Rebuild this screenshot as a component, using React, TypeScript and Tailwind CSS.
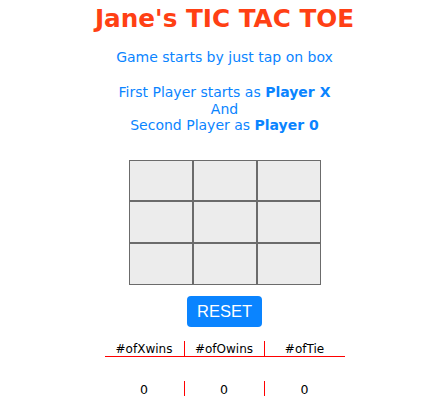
const cellHeights = ["h-[41px]", "h-[42px]", "h-[42px]"];

const Board = () => (
  <div className="mt-[26px] flex flex-col">
    {cellHeights.map((h, r) => (
      <div key={r} className="flex">
        {[0, 1, 2].map((c) => (
          <div key={c} className={`w-[64px] ${h} border border-[#6b6b6b] bg-[#ececec]`} />
        ))}
      </div>
    ))}
  </div>
);

const Scores = () => {
  const heads = ["#ofXwins", "#ofOwins", "#ofTie"];
  return (
    <div className="mt-[14px] w-[240px] text-[12px] text-black">
      <div className="flex h-[16px] border-b border-[#f00] leading-[14px]">
        {heads.map((h, i) => (
          <div key={h} className={`w-[80px] text-center pt-[1px] ${i < 2 ? "border-r border-[#f00]" : ""}`}>
            {h}
          </div>
        ))}
      </div>
      <div className="flex h-[15px] mt-[24px] leading-[15px] text-[12.5px]">
        {[0, 0, 0].map((v, i) => (
          <div key={i} className={`w-[80px] text-center pt-[1px] ${i < 2 ? "border-r border-[#f00]" : ""}`}>
            {v}
          </div>
        ))}
      </div>
    </div>
  );
};

export default function App() {
  return (
    <div className="flex flex-col items-center w-[447px] h-[412px] pl-[2px] bg-white font-['DejaVu_Sans',Verdana,sans-serif]">
      <h1 className="mt-[5px] text-[24.7px] leading-[28px] font-bold text-[#ff4014]">Jane's TIC TAC TOE</h1>
      <p className="mt-[16px] text-[14px] leading-[16.5px] text-[#0a84ff]">Game starts by just tap on box</p>
      <p className="mt-[18.5px] text-[14px] leading-[16.5px] text-[#0a84ff] text-center">
        First Player starts as <b>Player X</b>
        <br />
        And
        <br />
        Second Player as <b>Player 0</b>
      </p>
      <Board />
      <button className="mt-[11px] w-[75px] h-[31px] rounded-[4px] bg-[#0a84ff] text-white text-[16.5px] font-['Liberation_Sans',Arial,sans-serif]">
        RESET
      </button>
      <Scores />
    </div>
  );
}
